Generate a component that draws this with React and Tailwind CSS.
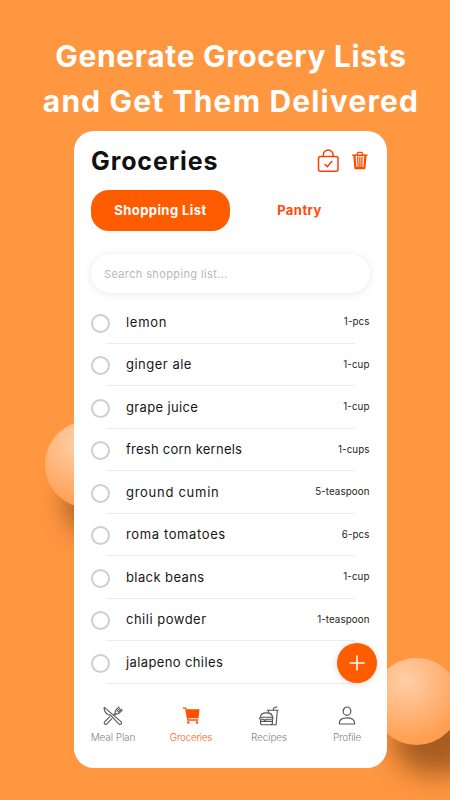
import React, { useState } from 'react';

const groceries = [
    { name: 'lemon', amount: '1-pcs', nameClass: 'tracking-[0.7px]' },
    { name: 'ginger ale', amount: '1-cup', nameClass: 'tracking-[0.5px]' },
    { name: 'grape juice', amount: '1-cup', nameClass: 'tracking-[0.35px]' },
    { name: 'fresh corn kernels', amount: '1-cups', nameClass: 'tracking-[0.25px]' },
    { name: 'ground cumin', amount: '5-teaspoon', nameClass: 'tracking-[0.72px]' },
    { name: 'roma tomatoes', amount: '6-pcs', nameClass: 'tracking-[0.62px]' },
    { name: 'black beans', amount: '1-cup', nameClass: 'tracking-[0.4px]' },
    { name: 'chili powder', amount: '1-teaspoon', nameClass: 'tracking-[0.5px]' },
    { name: 'jalapeno chiles', amount: '', nameClass: 'tracking-[0.38px]' },
];

const BagIcon = () => (
    <svg width="22" height="24" viewBox="0 0 22 24" fill="none" stroke="#ff3d0a" strokeWidth="1.5" strokeLinecap="round" strokeLinejoin="round">
        <rect x="1.500" y="7.500" width="19.500" height="14.700" rx="2" />
        <path d="M6.300 7.500V6a4.900 4.900 0 0 1 9.800 0v1.500" />
        <path d="M8 15.500l2.300 2.200 4.500-5.200" />
    </svg>
);

const TrashIcon = () => (
    <svg width="16" height="19" viewBox="0 0 16 19" fill="none" stroke="#ff4a00">
        <path d="M.3 4.200h15.200" strokeWidth="1.6" />
        <path d="M5.300 3.900V2.300c0-.6.3-.9.900-.9h3.400c.6 0 .9.300.900.9v1.600" strokeWidth="1.2" />
        <path d="M2.400 4.700l1 12.500h9l1-12.500" strokeWidth="2.200" strokeLinejoin="round" />
        <path d="M5.700 5.500l.4 11M7.900 5.500v11M10.100 5.500l-.4 11" strokeWidth="1.300" />
    </svg>
);

const MealIcon = () => (
    <svg width="20" height="20" viewBox="0 0 20 20" fill="none" stroke="#555" strokeWidth="1.100" strokeLinecap="round" strokeLinejoin="round">
        <path d="M1.3 1.3C.6 4 2.300 6.600 4.300 8.200c.9.8 2 .9 3 .6l8.500 9c.6.8 1.700.8 2.300.1.7-.7.5-1.600-.1-2.200L1.300 1.300z" />
        <path d="M11 8.300l1.300-1.300c-.4-1.500 0-2.600 1-3.600L16 .8M14 5.200l2.900-2.900M15.300 6.200l3-2.900M19.200 4.200l-2.700 2.700c-1 1-2.200 1.300-3.300 1l-1.300 1.300" />
        <path d="M6.800 10.600l-5 5c-.7.700-.8 1.700-.2 2.300.7.700 1.700.6 2.300-.1l5-5.200" />
    </svg>
);

const CartIcon = () => (
    <svg width="18" height="17" viewBox="0 0 18 17" fill="none" stroke="#ff5000">
        <path d="M.8 1.200h3L5.800 13h10.600" strokeWidth="1.300" />
        <path d="M3.600 2.200h13.900l-.9 9H5.400z" fill="#ff5000" stroke="none" />
        <circle cx="6.300" cy="15.500" r="1.300" fill="#ff5000" stroke="none" />
        <circle cx="15" cy="15.500" r="1.300" fill="#ff5000" stroke="none" />
    </svg>
);

const RecipesIcon = () => (
    <svg width="20" height="20" viewBox="0 0 20 20" fill="none" stroke="#555" strokeWidth="1.100" strokeLinecap="round" strokeLinejoin="round">
        <path d="M1.500 11.200c0-2.700 2.500-4.300 5.900-4.300s6.100 1.600 6.100 4.300z" />
        <path d="M1.200 11.300c-.9.800-.6 1.800.4 1.900h3l1.300 1 1.800-1h5.400c1.100-.2 1.300-1.300.4-1.900M1.500 15.400h12M1.500 13.300v3.500c0 1.200.8 2 2 2h8c1.200 0 2-.8 2-2v-3.500" />
        <path d="M8.200 4.300h10.900M9.300 4.500l.2 2M18.300 4.500l-1.200 14.300h-4.200M14.100 4.100l.7-2.100 3-1.300" />
    </svg>
);

const ProfileIcon = () => (
    <svg width="18" height="20" viewBox="0 0 18 20" fill="none" stroke="#555" strokeWidth="1.200" strokeLinejoin="round">
        <ellipse cx="9" cy="5.200" rx="3.800" ry="4.200" />
        <path d="M1.300 17.500c0-3.800 3.100-5.600 7.700-5.600s7.700 1.800 7.700 5.600c0 .3-.2.500-.5.500H1.800c-.3 0-.5-.2-.5-.5z" />
    </svg>
);

const tabs = [
    { label: 'Meal Plan', icon: <MealIcon />, className: 'text-[#858585] tracking-[-0.1px]' },
    { label: 'Groceries', icon: <CartIcon />, className: 'text-[#ff6420] tracking-[-0.3px]' },
    { label: 'Recipes', icon: <RecipesIcon />, className: 'text-[#858585] tracking-[-0.1px]' },
    { label: 'Profile', icon: <ProfileIcon />, className: 'text-[#858585] tracking-[-0.2px]' },
];

const Ball = ({ className }) => (
    <div className={`absolute h-[87px] w-[87px] ${className}`}>
        <div className="absolute top-[42px] left-[20px] h-[74px] w-[90px] rounded-full bg-[#8a4a18]/75 blur-[13px]"></div>
        <div className="absolute inset-0 rounded-full bg-[radial-gradient(circle_at_38%_26%,#ffcfa8_0%,#ffb67c_38%,#ff9f52_72%,#ff963f_100%)]"></div>
    </div>
);

const App = () => {
    const [checked, setChecked] = useState([]);

    const toggle = (name) => {
        setChecked((prev) => (prev.includes(name) ? prev.filter((n) => n !== name) : [...prev, name]));
    };

    return (
        <div className="relative h-[800px] w-[450px] overflow-hidden bg-[#ff9640] pt-[34px] font-['Inter',sans-serif]">
            <Ball className="top-[421px] left-[45px]" />
            <Ball className="top-[658px] left-[373px]" />

            <h1 className="relative flex flex-col items-center pl-[12px] text-[30px] leading-[45px] font-bold whitespace-nowrap text-white">
                <span className="tracking-[0.65px]">Generate Grocery Lists</span>
                <span className="tracking-[1.150px]">and Get Them Delivered</span>
            </h1>

            <div className="relative mt-[7px] ml-[74px] flex h-[636.5px] w-[312.5px] flex-col rounded-[20px] bg-white">
                <div className="flex h-[59px] items-center justify-between pr-[19px] pl-[17px]">
                    <h2 className="mt-[2px] text-[25px] font-bold tracking-[0.9px] text-[#111]">Groceries</h2>
                    <div className="flex items-center gap-[13px]">
                        <BagIcon />
                        <TrashIcon />
                    </div>
                </div>

                <div className="flex h-[41px] px-[17px]">
                    <button className="w-[139px] rounded-[18px] bg-[#ff5c00] pt-px text-[13px] font-bold text-white">
                        <span className="tracking-[0.42px]">Shopping List</span>
                    </button>
                    <button className="w-[139px] pt-px text-[13px] font-bold text-[#ff4a0a]">
                        <span className="tracking-[0.45px]">Pantry</span>
                    </button>
                </div>

                <div className="mx-[17px] mt-[23px] flex h-[39px] shrink-0 items-center rounded-full bg-white px-[13px] pt-px text-[11px] text-[#b9b9b9] shadow-[0_1px_8px_rgba(0,0,0,0.09)]">
                    <span className="tracking-[0.370px]">Search shopping list...</span>
                </div>

                <ul className="mt-[8px] flex flex-col px-[17px]">
                    {groceries.map((item) => (
                        <li key={item.name} className="flex h-[42.5px] flex-col">
                            <div className="flex flex-1 items-center">
                                <button
                                    onClick={() => toggle(item.name)}
                                    aria-label={item.name}
                                    className={`mt-[3px] h-[19px] w-[19px] rounded-full border-2 border-[#cfcfcf] ${checked.includes(item.name) ? 'bg-[#ff5c00]' : 'bg-white'}`}
                                ></button>
                                <span className={`mt-[1px] ml-[16px] flex-1 text-[13px] text-[#161616] ${item.nameClass}`}>{item.name}</span>
                                <span className="mt-[2px] text-[9.75px] tracking-[0.1px] text-[#222]">{item.amount}</span>
                            </div>
                            <div className="mx-[15px] h-px bg-[#ececec]"></div>
                        </li>
                    ))}
                </ul>

                <div className="mt-[21px] flex">
                    {tabs.map((tab) => (
                        <button key={tab.label} className="flex w-[78px] flex-col items-center">
                            <span className="flex h-[22px] items-center">{tab.icon}</span>
                            <span className={`mt-[3px] text-[10px] leading-[14px] font-light whitespace-nowrap ${tab.className}`}>{tab.label}</span>
                        </button>
                    ))}
                </div>

                <button aria-label="Add item" className="absolute top-[512px] left-[263px] flex h-[40px] w-[40px] items-center justify-center rounded-full bg-[#ff5c00] shadow-[0_1px_6px_rgba(0,0,0,0.15)]">
                    <svg width="16" height="16" viewBox="0 0 16 16" stroke="white" strokeWidth="1.500">
                        <path d="M8 .5v15M.5 8h15" />
                    </svg>
                </button>
            </div>
        </div>
    );
};

export default App;
